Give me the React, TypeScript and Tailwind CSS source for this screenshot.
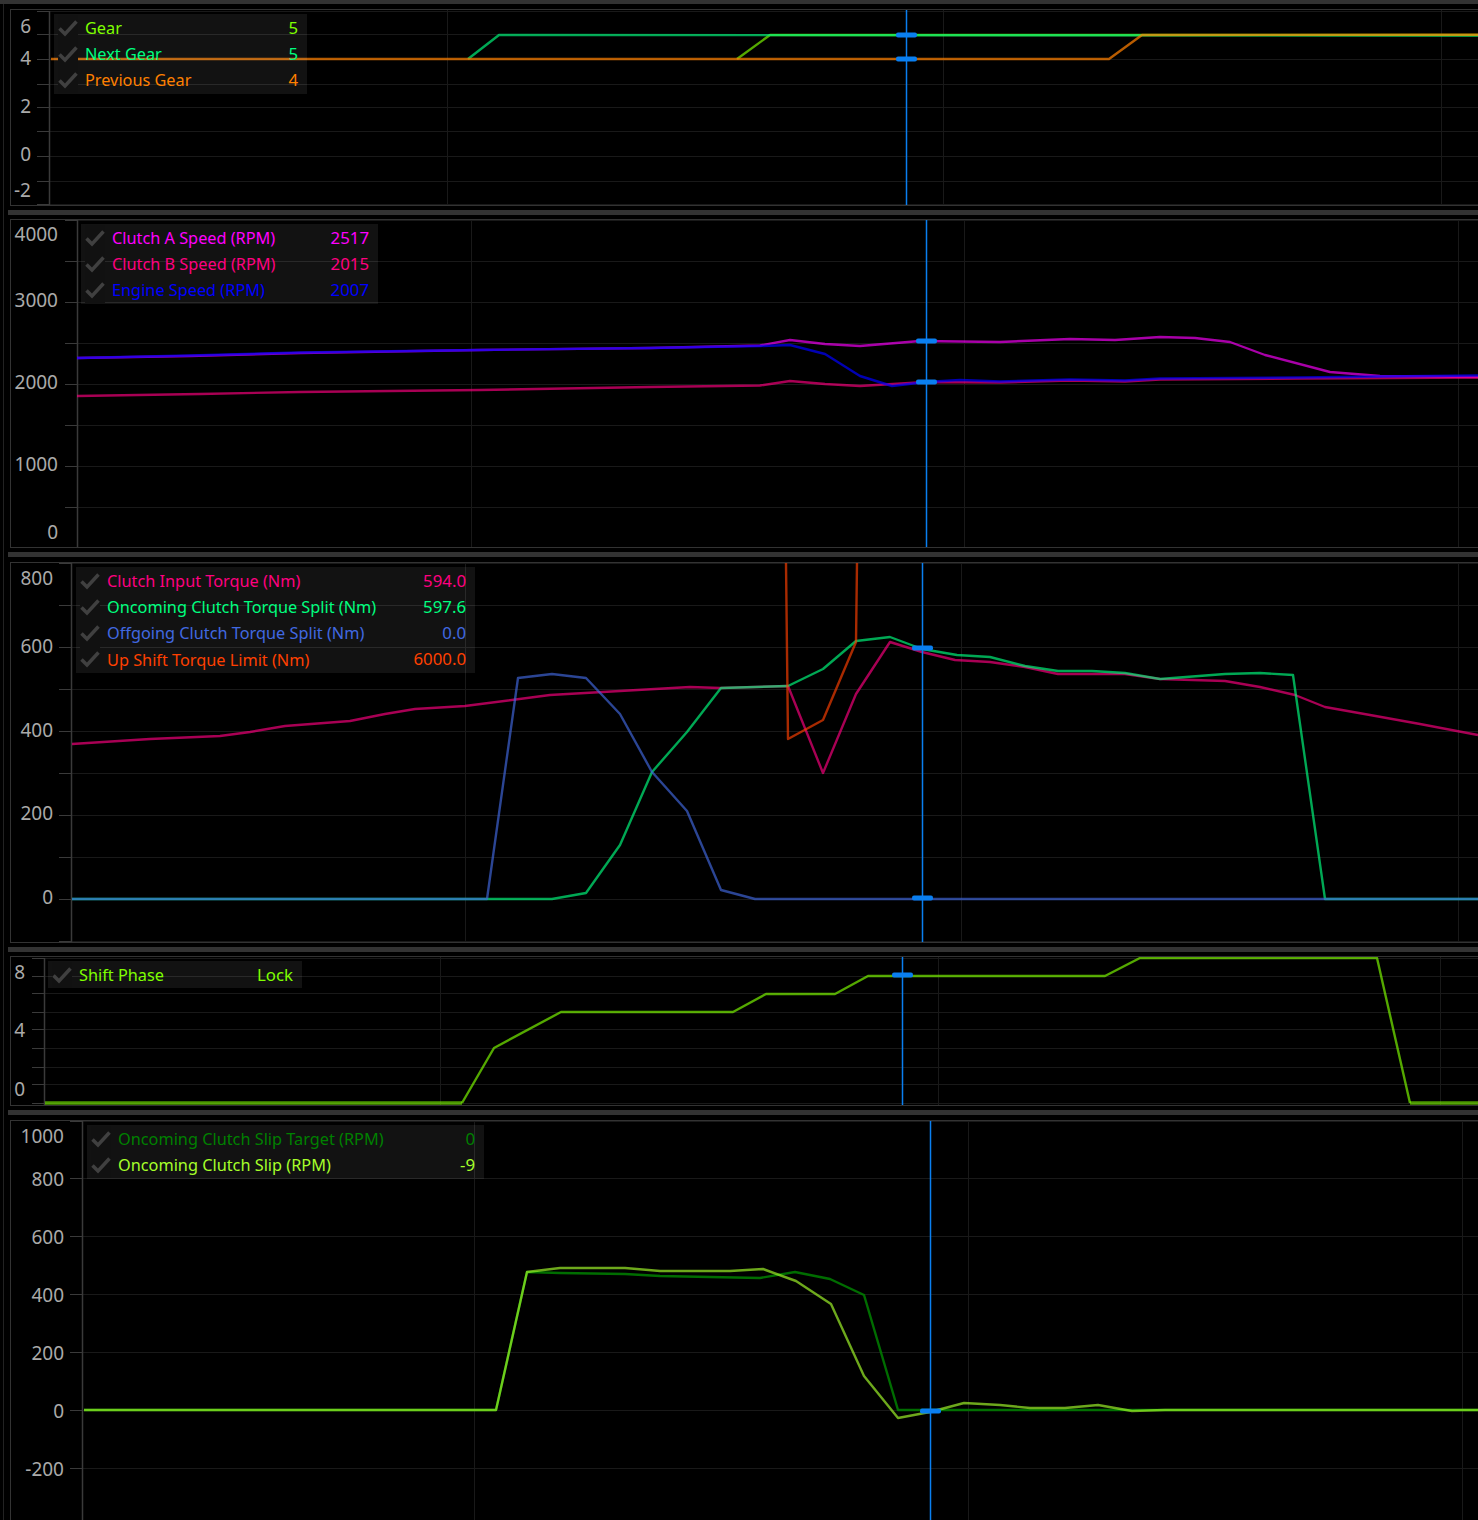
import React from "react";

type Pt = [number, number];
type Series = { color: string; points: Pt[]; opacity?: number; width?: number };
type Row = { label: string; value: string; color: string };
type PanelDef = {
  top: number;
  height: number;
  axisX: number;
  cursorX: number;
  ticks: number[];
  labels: [string, number][];
  labelRight: number;
  vgrid: number[];
  series: Series[];
  markers: number[];
  legend: Row[];
  legendClass: string;
  marginClass: string;
};

const LIME = "#7fff00";
const YELLOWGREEN = "#a6ff2a";
const SPRING = "#00ff7f";
const ORANGE = "#ff8000";
const ROSE = "#ff0080";
const MAGENTA = "#ff00ff";
const BLUE = "#0000ff";
const ROYAL = "#4169e1";
const RED = "#ff4000";
const GREEN = "#008000";

const aSpeed: Pt[] = [[77, 358], [190, 356], [300, 353], [480, 350], [650, 348], [760, 345.5], [790, 340], [825, 344], [860, 346], [920, 341], [1000, 342], [1070, 339], [1115, 340], [1160, 337], [1195, 338], [1230, 342], [1265, 355], [1330, 372], [1380, 376], [1478, 377]];
const bSpeed: Pt[] = [[77, 396], [200, 394], [300, 392], [480, 390], [650, 387], [760, 385.5], [790, 381], [825, 384], [860, 386], [926, 382], [1000, 382.5], [1070, 380.5], [1125, 381.5], [1160, 379.5], [1300, 378.5], [1478, 377.5]];
const engine: Pt[] = [[77, 358], [190, 355.5], [300, 352.5], [480, 350], [650, 348], [760, 346], [790, 345], [825, 354], [860, 376], [892, 386], [926, 382], [960, 380], [1000, 381.5], [1070, 379.5], [1125, 380.5], [1160, 378.5], [1300, 377.5], [1380, 376.5], [1478, 375.5]];

const panels: PanelDef[] = [
  {
    top: 9, height: 197, axisX: 49, cursorX: 906,
    ticks: [11, 34, 59, 84, 107, 131, 156, 181, 204],
    labels: [["6", 26], ["4", 58], ["2", 106], ["0", 154], ["-2", 190]],
    labelRight: 31, vgrid: [447, 943, 1441], markers: [35, 59],
    series: [
      { color: LIME, points: [[737, 59], [770, 35], [1478, 35]] },
      { color: SPRING, points: [[468, 59], [499, 35], [1478, 35.5]] },
      { color: ORANGE, points: [[51, 59], [1109, 59], [1142, 35], [1478, 34.8]], opacity: 0.72 },
    ],
    legend: [
      { label: "Gear", value: "5", color: LIME },
      { label: "Next Gear", value: "5", color: SPRING },
      { label: "Previous Gear", value: "4", color: ORANGE },
    ],
    legendClass: "left-[43px] top-[4px] w-[253px]",
    marginClass: "mt-[5px]",
  },
  {
    top: 219, height: 329, axisX: 77, cursorX: 926,
    ticks: [220, 261, 302, 343, 384, 425, 466, 507, 547],
    labels: [["4000", 234], ["3000", 300], ["2000", 382], ["1000", 464], ["0", 532]],
    labelRight: 58, vgrid: [471, 964, 1458], markers: [341, 382],
    series: [
      { color: MAGENTA, points: aSpeed },
      { color: ROSE, points: bSpeed },
      { color: BLUE, points: engine, opacity: 0.7 },
    ],
    legend: [
      { label: "Clutch A Speed (RPM)", value: "2517", color: MAGENTA },
      { label: "Clutch B Speed (RPM)", value: "2015", color: ROSE },
      { label: "Engine Speed (RPM)", value: "2007", color: BLUE },
    ],
    legendClass: "left-[70px] top-[4px] w-[297px]",
    marginClass: "mt-[4px]",
  },
  {
    top: 562, height: 381, axisX: 71, cursorX: 922,
    ticks: [563, 605, 647, 689, 731, 773, 815, 857, 899, 941],
    labels: [["800", 578], ["600", 646], ["400", 730], ["200", 813], ["0", 897]],
    labelRight: 53, vgrid: [465, 961, 1458], markers: [648, 898],
    series: [
      { color: ROSE, points: [[72, 744], [150, 739], [220, 736], [250, 732], [285, 726], [350, 721], [385, 714], [415, 709], [465, 706], [550, 695], [620, 691], [690, 687], [720, 688], [788, 686], [823, 773], [856, 694], [890, 642], [922, 652], [955, 660], [990, 662], [1025, 667], [1058, 674], [1125, 674], [1160, 679], [1225, 681], [1260, 687], [1295, 695], [1325, 707], [1370, 715], [1420, 724], [1478, 735]] },
      { color: SPRING, points: [[72, 899], [552, 899], [586, 893], [620, 845], [652, 772], [687, 732], [721, 688], [788, 686], [823, 669], [856, 641], [890, 637], [922, 649], [957, 655], [990, 657], [1025, 666], [1058, 671], [1092, 671], [1125, 673], [1160, 679], [1225, 674], [1260, 673], [1293, 675], [1325, 899], [1478, 899]] },
      { color: ROYAL, points: [[72, 899], [487, 899], [518, 678], [552, 674], [586, 678], [620, 714], [652, 772], [687, 811], [721, 890], [755, 899], [1478, 899]] },
      { color: RED, points: [[786, 563], [788, 739], [823, 720], [856, 642], [857, 563]] },
    ],
    legend: [
      { label: "Clutch Input Torque (Nm)", value: "594.0", color: ROSE },
      { label: "Oncoming Clutch Torque Split (Nm)", value: "597.6", color: SPRING },
      { label: "Offgoing Clutch Torque Split (Nm)", value: "0.0", color: ROYAL },
      { label: "Up Shift Torque Limit (Nm)", value: "6000.0", color: RED },
    ],
    legendClass: "left-[65px] top-[4px] w-[399px]",
    marginClass: "mt-[5px]",
  },
  {
    top: 956, height: 150, axisX: 44, cursorX: 902,
    ticks: [958, 976, 993, 1012, 1029, 1048, 1067, 1084, 1103],
    labels: [["8", 972], ["4", 1030], ["0", 1089]],
    labelRight: 25, vgrid: [440, 938, 1440], markers: [975],
    series: [
      { color: LIME, points: [[462, 1103], [494, 1048], [561, 1012], [733, 1012], [766, 994], [835, 994], [868, 976], [1105, 976], [1140, 958], [1377, 958], [1410, 1103]] },
      { color: LIME, points: [[45, 1103], [462, 1103]], width: 3.5, opacity: 0.6 },
      { color: LIME, points: [[1410, 1103], [1478, 1103]], width: 3.5, opacity: 0.6 },
    ],
    legend: [{ label: "Shift Phase", value: "Lock", color: LIME }],
    legendClass: "left-[37px] top-[4px] w-[254px]",
    marginClass: "mt-[4px]",
  },
  {
    top: 1120, height: 401, axisX: 82, cursorX: 930,
    ticks: [1121, 1178, 1236, 1294, 1352, 1410, 1468],
    labels: [["1000", 1136], ["800", 1179], ["600", 1237], ["400", 1295], ["200", 1353], ["0", 1411], ["-200", 1469]],
    labelRight: 64, vgrid: [474, 968, 1462], markers: [1411],
    series: [
      { color: GREEN, points: [[84, 1410], [496, 1410], [527, 1272], [560, 1273], [625, 1274], [660, 1276], [760, 1278], [795, 1272], [830, 1279], [864, 1295], [898, 1410], [1478, 1410]], opacity: 0.85 },
      { color: YELLOWGREEN, points: [[84, 1410], [496, 1410], [527, 1272], [560, 1268], [625, 1268], [660, 1271], [730, 1271], [763, 1269], [796, 1281], [831, 1304], [864, 1376], [898, 1418], [930, 1412], [964, 1403], [1000, 1405], [1030, 1408], [1065, 1408], [1098, 1405], [1132, 1411], [1165, 1410], [1478, 1410]] },
    ],
    legend: [
      { label: "Oncoming Clutch Slip Target (RPM)", value: "0", color: GREEN },
      { label: "Oncoming Clutch Slip (RPM)", value: "-9", color: YELLOWGREEN },
    ],
    legendClass: "left-[76px] top-[4px] w-[397px]",
    marginClass: "mt-[5px]",
  },
];

function LegendRow({ row }: { row: Row }) {
  return (
    <div className="flex h-[26.25px] items-center">
      <div className="ml-[4px] flex h-full w-[20px] shrink-0 items-center justify-center bg-[#111111]">
        <svg width="20" height="18" viewBox="0 0 20 18" className="block">
          <path d="M1.5 9.5 L7 15 L18.5 2.5" fill="none" stroke="#404040" strokeWidth="3.5" />
        </svg>
      </div>
      <span className="ml-[7px] flex-1 whitespace-nowrap pt-[1px] text-[16.3px] leading-none" style={{ color: row.color }}>
        {row.label}
      </span>
      <span className="mr-[9px] whitespace-nowrap pt-[1px] text-[16.8px] leading-none" style={{ color: row.color }}>
        {row.value}
      </span>
    </div>
  );
}

function Panel({ p }: { p: PanelDef }) {
  const w = 1467;
  const h = p.height - 2;
  const x0 = 11;
  const y0 = p.top + 1;
  return (
    <div className={`relative ml-[2px] shrink-0 border-y border-l border-[#333333] ${p.marginClass}`} style={{ height: p.height }}>
      <svg width={w} height={h} viewBox={`${x0} ${y0} ${w} ${h}`} className="block">
        {p.ticks.map((y) => (
          <line key={y} x1={p.axisX} x2={1478} y1={y + 0.5} y2={y + 0.5} stroke="#191919" strokeWidth="1" />
        ))}
        {p.vgrid.map((x) => (
          <line key={x} x1={x + 0.5} x2={x + 0.5} y1={p.top} y2={p.top + p.height} stroke="#191919" strokeWidth="1" />
        ))}
        {p.ticks.map((y) => (
          <line key={`t${y}`} x1={p.axisX - 12} x2={p.axisX} y1={y + 0.5} y2={y + 0.5} stroke="#3a3a3a" strokeWidth="1" />
        ))}
        <line x1={p.axisX + 0.5} x2={p.axisX + 0.5} y1={p.ticks[0]} y2={p.top + p.height} stroke="#3a3a3a" strokeWidth="1.5" />
        {p.labels.map(([t, y]) => (
          <text key={t} x={p.labelRight} y={y} textAnchor="end" dominantBaseline="central" fill="#aaaaaa" fontSize="19" fontFamily="'Noto Sans', sans-serif">
            {t}
          </text>
        ))}
        {p.series.map((s, i) => (
          <polyline
            key={i}
            points={s.points.map((pt) => pt.join(",")).join(" ")}
            fill="none"
            stroke={s.color}
            strokeWidth={s.width ?? 2.4}
            strokeLinejoin="round"
            strokeOpacity={s.opacity ?? 0.66}
          />
        ))}
        <line x1={p.cursorX + 0.5} x2={p.cursorX + 0.5} y1={p.top} y2={p.top + p.height} stroke="#0a7ff0" strokeWidth="1.5" />
        {p.markers.map((y) => (
          <rect key={y} x={p.cursorX - 10} y={y - 2.5} width="21" height="5" rx="2" fill="#0a7ff0" />
        ))}
      </svg>
      <div className={`absolute bg-[#ffffff12] py-[0.5px] font-['Noto_Sans',sans-serif] ${p.legendClass}`}>
        {p.legend.map((r) => (
          <LegendRow key={r.label} row={r} />
        ))}
      </div>
    </div>
  );
}

export default function App() {
  return (
    <div className="flex h-[1520px] w-[1478px] flex-col overflow-hidden bg-black">
      <div className="h-[4px] shrink-0 bg-[#333333]" />
      <div className="ml-[3px] flex flex-1 flex-col border-l border-[#222222] pl-[4px]">
        {panels.map((p, i) => (
          <React.Fragment key={p.top}>
            <Panel p={p} />
            {i < panels.length - 1 && <div className="mt-[4px] h-[5px] shrink-0 bg-[#333333]" />}
          </React.Fragment>
        ))}
      </div>
    </div>
  );
}
